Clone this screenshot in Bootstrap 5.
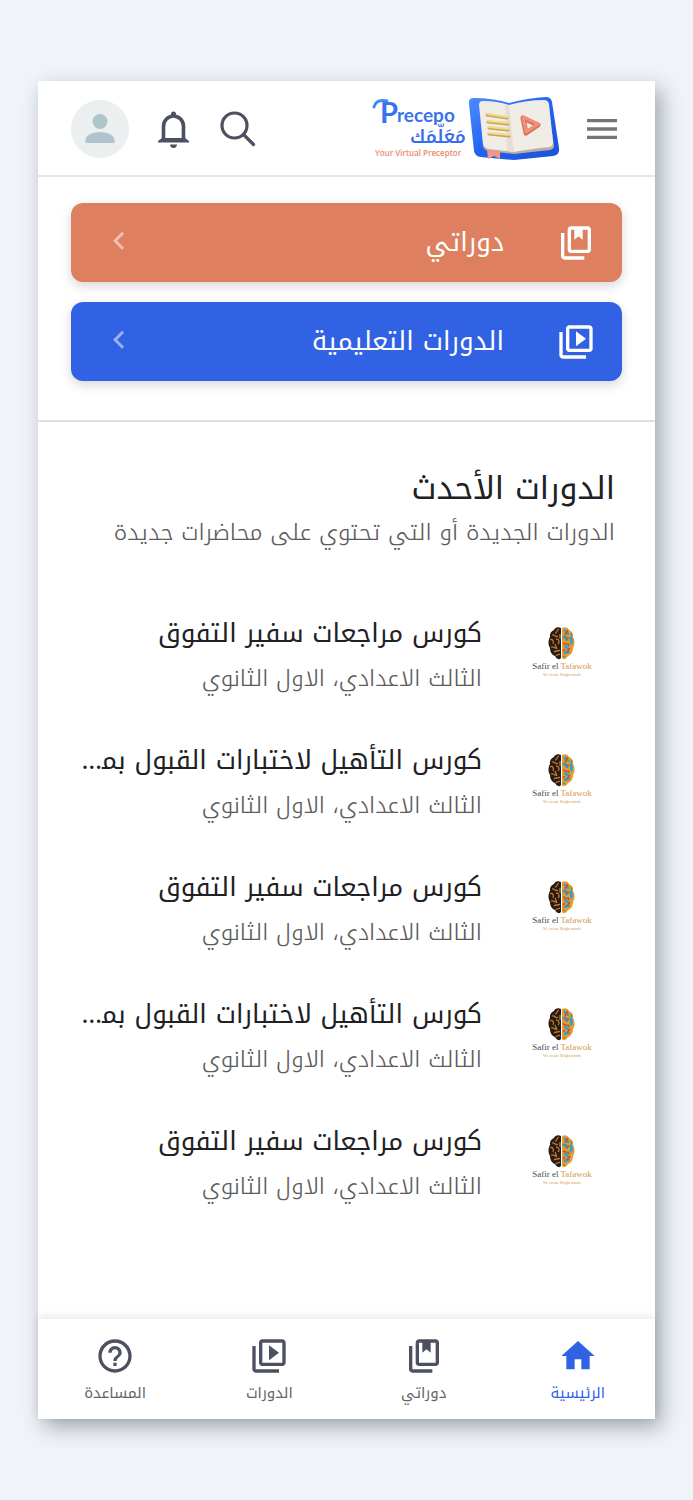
<!DOCTYPE html>
<html lang="ar" dir="rtl">
<head>
<meta charset="utf-8">
<meta name="viewport" content="width=device-width, initial-scale=1">
<title>Precepo</title>
<link rel="stylesheet" href="https://cdn.jsdelivr.net/npm/bootstrap@5.3.0/dist/css/bootstrap.min.css">
<style>
body{background:#f0f4f9;font-family:"Noto Kufi Arabic","DejaVu Sans",sans-serif;color:#202124}
.stage{padding:81px 38px}
.phone{background:#fff;box-shadow:6px 8px 20px rgba(40,50,60,.4)}
.side{padding-inline:33px}
.topbar{height:96px;padding-top:2px;border-bottom:2px solid #e6e6e6}
.topbar .start{gap:22px}
.topbar .end{gap:29px}
.plain{background:none;border:0;padding:0;line-height:0;color:#4d5060}
.plain.user-pic{width:58px;height:58px;border-radius:50%;background:#ebefef;color:#b0c4cc}
.shortcuts{padding-top:26px;padding-bottom:39px;gap:20px;border-bottom:2px solid #e0e0e0}
.tile{height:79px;border:0;border-radius:12px;padding:0 26px 0 30px;color:#fff;font-size:26px;line-height:40px;box-shadow:0 4px 12px rgba(0,0,0,.16)}
.tile .label{margin-inline-start:52px}
.tile:hover,.tile:focus{color:#fff}
.tile.coral,.tile.coral:hover{background:#de8060}
.tile.royal,.tile.royal:hover{background:#3162e4}
.latest{padding:41px 40px 92px}
.latest h1{font-size:32px;line-height:52px;font-weight:400;margin:0}
.latest .sub{font-size:23px;font-weight:340;line-height:36px;color:#5c5c5c;margin:0 0 41px}
.course{height:127px;color:inherit;text-decoration:none}
.course .pic{width:106px;flex:none;line-height:0;text-align:center}
.course .txt{padding-inline-start:27px;min-width:0;flex:1}
.course .name{font-size:26px;font-weight:380;line-height:46px}
.course .grade{font-size:23px;font-weight:340;line-height:44px;color:#5c5c5c}
.tabs{height:100px;box-shadow:0 -2px 8px rgba(0,0,0,.1);background:#fff}
.tabs a{flex:1 1 0;color:#666;text-decoration:none;font-size:15px;line-height:34px;padding-top:17px}
.tabs svg{color:#4d5060}
.tabs a.on,.tabs a.on svg{color:#3162e4}
.art{direction:ltr}
.art .word{font-family:Lato,sans-serif;font-weight:700;fill:#3a72ee}
.art .arabic{font-family:"Noto Kufi Arabic","DejaVu Sans",sans-serif;font-weight:600;font-size:18px;fill:#3a6cf0}
.art .tagline{font-family:"Open Sans",sans-serif;font-weight:600;font-size:8px;fill:#e98a6c}
.art .brand{font-family:"Liberation Serif",serif;font-size:9px;text-anchor:middle;fill:#454a50}
.art .motto{font-family:"Liberation Serif",serif;font-size:4px;text-anchor:middle;fill:#d49a4c}
</style>
</head>
<body>
<svg width="0" height="0" class="position-absolute" aria-hidden="true">
<defs>
<linearGradient id="cover" x1="0" y1="0" x2="1" y2="1"><stop offset="0" stop-color="#4d8dff"/><stop offset=".5" stop-color="#2163f0"/><stop offset="1" stop-color="#1c50d8"/></linearGradient>
</defs>
<symbol id="i-book" viewBox="0 0 24 24"><path fill="currentColor" d="M5 6H3v14c0 1.100.9 2 2 2h12v-2H5V6z"/><path fill="currentColor" d="M19 2H9c-1.100 0-2 .9-2 2v12c0 1.100.9 2 2 2h10c1.100 0 2-.9 2-2V4c0-1.100-.9-2-2-2zm0 14H9V4h2v6l2.500-2 2.500 2V4h3v12z"/></symbol>
<symbol id="i-video" viewBox="0 0 24 24"><path fill="currentColor" d="M4 6H2v14c0 1.100.9 2 2 2h14v-2H4V6zm16-4H8c-1.100 0-2 .9-2 2v12c0 1.100.9 2 2 2h12c1.100 0 2-.9 2-2V4c0-1.100-.9-2-2-2zm0 14H8V4h12v12zM12 5.500v9l6-4.500z"/></symbol>
<symbol id="i-back" viewBox="0 1.500 24 24"><path fill="#fff" opacity=".5" d="M15.410 7.410L14 6l-6 6 6 6 1.410-1.410L10.830 12z"/></symbol>
<symbol id="brain" viewBox="0 0 27 33">
<path fill="#2a1a10" d="M13 1C10-.5 7 .5 6 3 3 4 1.500 7 2 10 0 13 0 18 2 21c0 4 2 7 5 8 2 3.500 5 4 6 2z"/>
<path fill="none" stroke="#b97a33" stroke-width="1.300" d="M11 2c-3 1-1 4-4 4M4 8c3-1 3 3 6 1M2 13c3-2 4 2 3 4M8 12c3 0 4 3 2 5M3 20c3-1 4 2 6 1M6 25c2-2 4 0 6-2M8 29c1-2 3-1 4-2M7 17l2 5M12 7v5"/>
<path fill="#e89a2e" d="M14 1c3-1.500 6-.5 7 2 3 1 4.500 4 4 7 2 3 2 8 0 11 0 4-2 7-5 8-2 3.500-5 4-6 2z"/>
<path fill="none" stroke="#2ba3d0" stroke-width="2.800" d="M16 4c3 0 2 3 5 3M15 11c2-2 4 1 4 3M22 10c3 2 0 5 2 7M16 19c3-1 2 3 5 2M17 27c0-3 3-1 4-3"/>
<path fill="none" stroke="#d9492f" stroke-width="1.500" d="M20 3l-3 5M21 11l-3 1M15 16c2 0 3 2 6 1M22 21l-3 4M15 24l2-2"/>
<path fill="none" stroke="#4e9a4b" stroke-width="1.300" d="M23 6l1 3M16 9l3 1M22 18l-2 1M15 29l2 1"/>
</symbol>
</svg>
<div class="stage">
<div class="phone">
<header class="topbar side d-flex align-items-center justify-content-between">
<div class="start d-flex align-items-center">
<button class="plain" aria-label="القائمة"><svg width="40" height="40" viewBox="0 0 24 24" fill="#757575"><path d="M3 18h18v-2H3v2zm0-5h18v-2H3v2zm0-7v2h18V6H3z"/></svg></button>
<a href="#" class="plain" aria-label="Precepo"><svg class="art" width="188" height="66" viewBox="0 0 188 66">
<text class="word" x="8" y="27" font-size="29">P</text>
<text class="word" x="25" y="26" font-size="19">recepo</text>
<path d="M2 11Q4 3 15 5" fill="none" stroke="#3a8cf4" stroke-width="3" stroke-linecap="round"/>
<text class="arabic" x="38" y="47">مَعَلّمَك</text>
<text class="tagline" x="3" y="60">Your Virtual Preceptor</text>
<path fill="url(#cover)" d="M97 8Q96 2 102 2Q120 2 137 7Q156 2 174 1Q179 1 180 6L187 52Q188 59 181 60L142 64L108 61Q103 60 102 55Z"/>
<path fill="#b9aea0" d="M109 8L137 11L176 8L182 50Q182 53 178 54L142 58L116 55Q112 54 111 50Z"/>
<path fill="#f0ece6" d="M107 9Q107 5 111 5Q125 5 137 9Q155 4 172 4Q176 4 177 8L181 46Q181 50 178 51Q158 53 142 56L116 53Q112 52 111 48Z"/>
<path fill="#dfd9d1" d="M133 8l4 1 5 47-7-1z" opacity=".7"/>
<g stroke-linecap="round" stroke="#c9a750" stroke-width="3"><path d="M115 19l20 3M116 26l20 2M117 32l19 2M117 38l20 2"/></g>
<g stroke-linecap="round" stroke="#f3d98a" stroke-width="2"><path d="M115 18l20 3M116 25l20 2M117 31l19 2M117 37l20 2"/></g>
<path d="M151 22l15 7-12 8z" fill="#f0ece6" stroke="#d96f5d" stroke-width="5" stroke-linejoin="round"/>
<path d="M151 21l15 7-12 8z" fill="none" stroke="#f08f7c" stroke-width="3" stroke-linejoin="round"/>
<path fill="#f2978a" d="M115 54l13 1v8l-6-3-6 3z"/>
</svg></a>
</div>
<div class="end d-flex align-items-center">
<button class="plain" aria-label="بحث"><svg width="36" height="36" viewBox="0 0 36 36" fill="none" stroke="currentColor" stroke-width="3.200"><circle cx="14.500" cy="14.500" r="12.500"/><path d="M23.500 23.500L33.500 33.500" stroke-linecap="round"/></svg></button>
<button class="plain" aria-label="الإشعارات"><svg width="33" height="37" viewBox="0 0 33 37" fill="currentColor"><path d="M5.500 29V15.500a10 10.500 0 0 1 20 0V29" fill="none" stroke="currentColor" stroke-width="3.600"/><path d="M13 5V3a2.500 2.500 0 0 1 5 0v2zM4 27h23l4 3v1.500H0V30zM12 33.500h7q-.5 3.500-3.500 3.500T12 33.500z"/></svg></button>
<button class="plain user-pic" aria-label="الحساب"><svg width="58" height="58" viewBox="0 0 58 58" fill="currentColor"><circle cx="29" cy="21.500" r="7.500"/><path d="M14.500 43v-3c0-5 7-8 14.500-8s14.500 3 14.500 8v3z"/></svg></button>
</div>
</header>
<section class="shortcuts side d-flex flex-column">
<button class="tile coral btn d-flex align-items-center"><svg width="40" height="40"><use href="#i-book"/></svg><span class="label">دوراتي</span><svg class="me-auto" width="36" height="36"><use href="#i-back"/></svg></button>
<button class="tile royal btn d-flex align-items-center"><svg width="40" height="40"><use href="#i-video"/></svg><span class="label">الدورات التعليمية</span><svg class="me-auto" width="36" height="36"><use href="#i-back"/></svg></button>
</section>
<main class="latest">
<h1>الدورات الأحدث</h1>
<p class="sub">الدورات الجديدة أو التي تحتوي على محاضرات جديدة</p>
<a href="#" class="course d-flex align-items-center"><span class="pic"><svg class="art" width="66" height="60"><use href="#brain" x="19" y="1" width="27" height="33"/><text class="brand" x="33" y="43">Safir el <tspan fill="#d49a4c">Tafawok</tspan></text><text class="motto" x="33" y="50">We create Bright minds</text></svg></span><span class="txt"><span class="name d-block text-truncate">كورس مراجعات سفير التفوق</span><span class="grade d-block">الثالث الاعدادي، الاول الثانوي</span></span></a>
<a href="#" class="course d-flex align-items-center"><span class="pic"><svg class="art" width="66" height="60"><use href="#brain" x="19" y="1" width="27" height="33"/><text class="brand" x="33" y="43">Safir el <tspan fill="#d49a4c">Tafawok</tspan></text><text class="motto" x="33" y="50">We create Bright minds</text></svg></span><span class="txt"><span class="name d-block text-truncate">كورس التأهيل لاختبارات القبول بمدارس المتفوقين</span><span class="grade d-block">الثالث الاعدادي، الاول الثانوي</span></span></a>
<a href="#" class="course d-flex align-items-center"><span class="pic"><svg class="art" width="66" height="60"><use href="#brain" x="19" y="1" width="27" height="33"/><text class="brand" x="33" y="43">Safir el <tspan fill="#d49a4c">Tafawok</tspan></text><text class="motto" x="33" y="50">We create Bright minds</text></svg></span><span class="txt"><span class="name d-block text-truncate">كورس مراجعات سفير التفوق</span><span class="grade d-block">الثالث الاعدادي، الاول الثانوي</span></span></a>
<a href="#" class="course d-flex align-items-center"><span class="pic"><svg class="art" width="66" height="60"><use href="#brain" x="19" y="1" width="27" height="33"/><text class="brand" x="33" y="43">Safir el <tspan fill="#d49a4c">Tafawok</tspan></text><text class="motto" x="33" y="50">We create Bright minds</text></svg></span><span class="txt"><span class="name d-block text-truncate">كورس التأهيل لاختبارات القبول بمدارس المتفوقين</span><span class="grade d-block">الثالث الاعدادي، الاول الثانوي</span></span></a>
<a href="#" class="course d-flex align-items-center"><span class="pic"><svg class="art" width="66" height="60"><use href="#brain" x="19" y="1" width="27" height="33"/><text class="brand" x="33" y="43">Safir el <tspan fill="#d49a4c">Tafawok</tspan></text><text class="motto" x="33" y="50">We create Bright minds</text></svg></span><span class="txt"><span class="name d-block text-truncate">كورس مراجعات سفير التفوق</span><span class="grade d-block">الثالث الاعدادي، الاول الثانوي</span></span></a>
</main>
<nav class="tabs d-flex text-center">
<a href="#" class="on"><svg width="40" height="40" viewBox="0 0 24 24"><path fill="currentColor" d="M10 20v-6h4v6h5v-8h3L12 3 2 12h3v8z"/></svg><span class="d-block">الرئيسية</span></a>
<a href="#"><svg width="40" height="40"><use href="#i-book"/></svg><span class="d-block">دوراتي</span></a>
<a href="#"><svg width="40" height="40"><use href="#i-video"/></svg><span class="d-block">الدورات</span></a>
<a href="#"><svg width="40" height="40" viewBox="0 0 24 24"><path fill="currentColor" d="M11 18h2v-2h-2v2zm1-16C6.480 2 2 6.480 2 12s4.480 10 10 10 10-4.480 10-10S17.520 2 12 2zm0 18c-4.410 0-8-3.590-8-8s3.590-8 8-8 8 3.590 8 8-3.590 8-8 8zm0-14c-2.210 0-4 1.790-4 4h2c0-1.100.9-2 2-2s2 .9 2 2c0 2-3 1.750-3 5h2c0-2.250 3-2.500 3-5 0-2.210-1.790-4-4-4z"/></svg><span class="d-block">المساعدة</span></a>
</nav>
</div>
</div>
<script src="https://cdn.jsdelivr.net/npm/bootstrap@5.3.0/dist/js/bootstrap.bundle.min.js"></script>
</body>
</html>
